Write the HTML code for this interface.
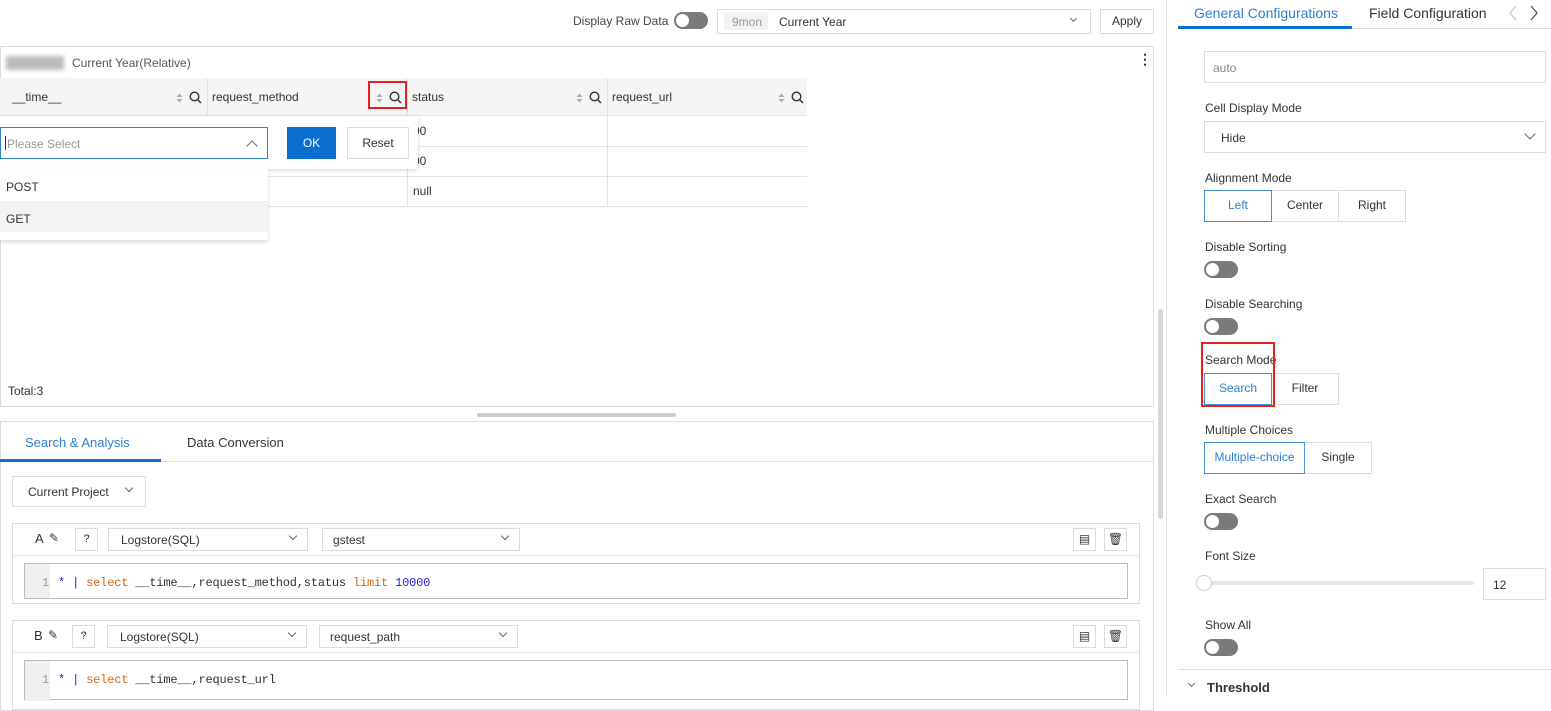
<!DOCTYPE html>
<html><head><meta charset="utf-8"><style>
*{box-sizing:border-box;margin:0;padding:0}
body{width:1551px;height:697px;overflow:hidden;background:#fff;font-family:"Liberation Sans",sans-serif;font-size:12px;color:#333;position:relative}
.a{position:absolute}
.bx{position:absolute;border:1px solid #dcdcdc;background:#fff}
.t{position:absolute;white-space:nowrap;line-height:14px}
.tog{position:absolute;width:34px;height:17px;border-radius:9px;background:#7a7a7a}
.tog:after{content:"";position:absolute;left:2px;top:2px;width:13px;height:13px;border-radius:50%;background:#fff}
.chev{position:absolute;width:8px;height:8px;border-right:1px solid #666;border-bottom:1px solid #666;transform:rotate(45deg)}
.btn{position:absolute;border:1px solid #dcdcdc;background:#fff;text-align:center;line-height:29px;font-size:12px;color:#333}
.btn.on{border-color:#4a90d9;color:#2d7fd0;z-index:2}
.mono{font-family:"Liberation Mono",monospace;font-size:12px;letter-spacing:-0.18px}
.mag{position:absolute;width:13px;height:13px}
.srt{position:absolute;width:7px;height:10px}
</style></head><body>

<div class="t" style="left:573px;top:14px;color:#444">Display Raw Data</div>
<div class="tog" style="left:674px;top:12px"></div>
<div class="bx" style="left:717px;top:9px;width:374px;height:25px"></div>
<div class="a" style="left:724px;top:13px;width:44px;height:17px;background:#f2f2f2"></div>
<div class="t" style="left:732px;top:15px;color:#999">9mon</div>
<div class="t" style="left:779px;top:15px;color:#333">Current Year</div>
<div class="chev" style="left:1071px;top:16px;width:5px;height:5px"></div>
<div class="bx" style="left:1100px;top:9px;width:54px;height:25px;text-align:center;line-height:23px;font-size:12px">Apply</div>

<div class="bx" style="left:0;top:46px;width:1154px;height:361px"></div>
<div class="a" style="left:6px;top:56px;width:58px;height:14px;background:#bbb;filter:blur(2px)"></div>
<div class="t" style="left:72px;top:56px;color:#555">Current Year(Relative)</div>
<div class="t" style="left:1138px;top:52px;font-weight:bold;font-size:14px">⋮</div>
<div class="a" style="left:0;top:78px;width:807px;height:38px;background:#f5f5f5;border-bottom:1px solid #e3e3e3"></div>
<div class="a" style="left:207px;top:78px;width:1px;height:129px;background:#e3e3e3"></div>
<div class="a" style="left:407px;top:78px;width:1px;height:129px;background:#e3e3e3"></div>
<div class="a" style="left:607px;top:78px;width:1px;height:129px;background:#e3e3e3"></div>
<div class="a" style="left:0;top:146px;width:807px;height:1px;background:#e3e3e3"></div>
<div class="a" style="left:0;top:176px;width:807px;height:1px;background:#e3e3e3"></div>
<div class="a" style="left:0;top:206px;width:807px;height:1px;background:#e3e3e3"></div>
<div class="t" style="left:12px;top:90px">__time__</div>
<div class="t" style="left:212px;top:90px">request_method</div>
<div class="t" style="left:412px;top:90px">status</div>
<div class="t" style="left:612px;top:90px">request_url</div>

<svg class="srt" style="left:176px;top:93px" viewBox="0 0 7 10"><path d="M0.5 4L3.5 0.5L6.5 4ZM0.5 6L3.5 9.5L6.5 6Z" fill="#aaa"/></svg>
<svg class="mag" style="left:189px;top:91px" viewBox="0 0 13 13"><circle cx="5.5" cy="5.5" r="4.3" fill="none" stroke="#333" stroke-width="1.4"/><path d="M8.6 8.6L12 12" stroke="#333" stroke-width="1.5"/></svg>
<svg class="srt" style="left:376px;top:93px" viewBox="0 0 7 10"><path d="M0.5 4L3.5 0.5L6.5 4ZM0.5 6L3.5 9.5L6.5 6Z" fill="#aaa"/></svg>
<svg class="mag" style="left:389px;top:91px" viewBox="0 0 13 13"><circle cx="5.5" cy="5.5" r="4.3" fill="none" stroke="#333" stroke-width="1.4"/><path d="M8.6 8.6L12 12" stroke="#333" stroke-width="1.5"/></svg>
<svg class="srt" style="left:576px;top:93px" viewBox="0 0 7 10"><path d="M0.5 4L3.5 0.5L6.5 4ZM0.5 6L3.5 9.5L6.5 6Z" fill="#aaa"/></svg>
<svg class="mag" style="left:589px;top:91px" viewBox="0 0 13 13"><circle cx="5.5" cy="5.5" r="4.3" fill="none" stroke="#333" stroke-width="1.4"/><path d="M8.6 8.6L12 12" stroke="#333" stroke-width="1.5"/></svg>
<svg class="srt" style="left:778px;top:93px" viewBox="0 0 7 10"><path d="M0.5 4L3.5 0.5L6.5 4ZM0.5 6L3.5 9.5L6.5 6Z" fill="#aaa"/></svg>
<svg class="mag" style="left:791px;top:91px" viewBox="0 0 13 13"><circle cx="5.5" cy="5.5" r="4.3" fill="none" stroke="#333" stroke-width="1.4"/><path d="M8.6 8.6L12 12" stroke="#333" stroke-width="1.5"/></svg>

<div class="a" style="left:368px;top:81px;width:39px;height:28px;border:2px solid #e82020"></div>
<div class="t" style="left:413px;top:124px">00</div>
<div class="t" style="left:413px;top:154px">00</div>
<div class="t" style="left:413px;top:184px">null</div>

<div class="a" style="left:0;top:116px;width:418px;height:53px;background:#fff;box-shadow:0 1px 4px rgba(0,0,0,.18)"></div>
<div class="a" style="left:0;top:127px;width:268px;height:32px;border:1px solid #2d7fd0;background:#fff"></div>
<div class="a" style="left:5px;top:136px;width:1px;height:14px;background:#333"></div>
<div class="t" style="left:7px;top:137px;color:#999">Please Select</div>
<div class="chev" style="left:248px;top:142px;transform:rotate(225deg)"></div>
<div class="a" style="left:287px;top:127px;width:49px;height:32px;background:#0a6fd0;color:#fff;text-align:center;line-height:32px;font-size:12px">OK</div>
<div class="bx" style="left:347px;top:127px;width:62px;height:32px;text-align:center;line-height:30px">Reset</div>
<div class="a" style="left:0;top:169px;width:268px;height:71px;background:#fff;box-shadow:0 2px 4px rgba(0,0,0,.15)"></div>
<div class="t" style="left:6px;top:180px">POST</div>
<div class="a" style="left:0;top:201px;width:268px;height:31px;background:#f3f3f3"></div>
<div class="t" style="left:6px;top:212px">GET</div>

<div class="t" style="left:8px;top:384px">Total:3</div>
<div class="a" style="left:477px;top:413px;width:199px;height:4px;background:#ccc;border-radius:2px"></div>

<div class="bx" style="left:0;top:421px;width:1154px;height:290px"></div>
<div class="a" style="left:0;top:461px;width:1154px;height:1px;background:#e3e3e3"></div>
<div class="t" style="left:25px;top:436px;color:#2d7fd0;font-size:13px">Search &amp; Analysis</div>
<div class="t" style="left:187px;top:436px;color:#333;font-size:13px">Data Conversion</div>
<div class="a" style="left:0;top:459px;width:161px;height:3px;background:#0a6fd0"></div>
<div class="bx" style="left:12px;top:476px;width:134px;height:31px"></div>
<div class="t" style="left:28px;top:485px">Current Project</div>
<div class="chev" style="left:126px;top:485px;width:6px;height:6px"></div>

<div class="bx" style="left:12px;top:523px;width:1128px;height:81px"></div>
<div class="a" style="left:12px;top:555px;width:1128px;height:1px;background:#e6e6e6"></div>
<div class="t" style="left:35px;top:532px;font-size:13px">A</div>
<div class="t" style="left:49px;top:531px;font-size:12px">✎</div>
<div class="bx" style="left:75px;top:528px;width:23px;height:23px;text-align:center;line-height:21px;font-size:11px">?</div>
<div class="bx" style="left:108px;top:528px;width:200px;height:23px"></div>
<div class="t" style="left:121px;top:533px">Logstore(SQL)</div>
<div class="chev" style="left:290px;top:533px;width:6px;height:6px"></div>
<div class="bx" style="left:322px;top:528px;width:198px;height:23px"></div>
<div class="t" style="left:333px;top:533px">gstest</div>
<div class="chev" style="left:502px;top:533px;width:6px;height:6px"></div>
<div class="bx" style="left:1073px;top:528px;width:23px;height:23px;text-align:center;line-height:21px">▤</div>
<div class="bx" style="left:1104px;top:528px;width:23px;height:23px;text-align:center;line-height:21px">🗑</div>
<div class="a" style="left:24px;top:563px;width:1104px;height:36px;border:1px solid #bbb;background:#fff"></div>
<div class="a" style="left:25px;top:564px;width:25px;height:34px;background:#f0f0f0"></div>
<div class="t mono" style="left:42px;top:576px;color:#999">1</div>
<div class="t mono" style="left:58px;top:576px"><span style="color:#22d">*</span> <span style="color:#22d">|</span> <span style="color:#d9630e">select</span> __time__,request_method,status <span style="color:#d9630e">limit</span> <span style="color:#22d">10000</span></div>

<div class="bx" style="left:12px;top:620px;width:1128px;height:90px"></div>
<div class="a" style="left:12px;top:652px;width:1128px;height:1px;background:#e6e6e6"></div>
<div class="t" style="left:34px;top:629px;font-size:13px">B</div>
<div class="t" style="left:48px;top:628px">✎</div>
<div class="bx" style="left:72px;top:625px;width:23px;height:23px;text-align:center;line-height:21px;font-size:11px">?</div>
<div class="bx" style="left:107px;top:625px;width:200px;height:23px"></div>
<div class="t" style="left:120px;top:630px">Logstore(SQL)</div>
<div class="chev" style="left:289px;top:630px;width:6px;height:6px"></div>
<div class="bx" style="left:319px;top:625px;width:199px;height:23px"></div>
<div class="t" style="left:330px;top:630px">request_path</div>
<div class="chev" style="left:500px;top:630px;width:6px;height:6px"></div>
<div class="bx" style="left:1073px;top:625px;width:23px;height:23px;text-align:center;line-height:21px">▤</div>
<div class="bx" style="left:1104px;top:625px;width:23px;height:23px;text-align:center;line-height:21px">🗑</div>
<div class="a" style="left:24px;top:660px;width:1104px;height:40px;border:1px solid #bbb;background:#fff"></div>
<div class="a" style="left:25px;top:661px;width:25px;height:40px;background:#f0f0f0"></div>
<div class="t mono" style="left:42px;top:673px;color:#999">1</div>
<div class="t mono" style="left:58px;top:673px"><span style="color:#22d">*</span> <span style="color:#22d">|</span> <span style="color:#d9630e">select</span> __time__,request_url</div>

<div class="a" style="left:1158px;top:309px;width:5px;height:210px;background:#d5d8dc;border-radius:3px"></div>
<div class="a" style="left:1166px;top:0;width:1px;height:697px;background:#e3e3e3"></div>

<div class="a" style="left:1178px;top:28px;width:373px;height:1px;background:#ddd"></div>
<div class="t" style="left:1194px;top:6px;color:#2d7fd0;font-size:14px">General Configurations</div>
<div class="a" style="left:1178px;top:26px;width:174px;height:3px;background:#0a6fd0"></div>
<div class="t" style="left:1369px;top:6px;color:#333;font-size:14px">Field Configuration</div>
<svg class="a" style="left:1508px;top:5px" width="10" height="16" viewBox="0 0 10 16"><path d="M8 1L2 8L8 15" fill="none" stroke="#ccc" stroke-width="1.3"/></svg>
<svg class="a" style="left:1529px;top:5px" width="10" height="16" viewBox="0 0 10 16"><path d="M2 1L8 8L2 15" fill="none" stroke="#555" stroke-width="1.3"/></svg>

<div class="bx" style="left:1204px;top:51px;width:342px;height:32px"></div>
<div class="t" style="left:1213px;top:61px;color:#888">auto</div>
<div class="t" style="left:1205px;top:101px">Cell Display Mode</div>
<div class="bx" style="left:1204px;top:121px;width:342px;height:32px"></div>
<div class="t" style="left:1221px;top:131px">Hide</div>
<div class="chev" style="left:1526px;top:130px"></div>
<div class="t" style="left:1205px;top:171px">Alignment Mode</div>
<div class="btn on" style="left:1204px;top:190px;width:68px;height:32px">Left</div>
<div class="btn" style="left:1271px;top:190px;width:68px;height:32px">Center</div>
<div class="btn" style="left:1338px;top:190px;width:68px;height:32px">Right</div>
<div class="t" style="left:1205px;top:240px">Disable Sorting</div>
<div class="tog" style="left:1204px;top:261px"></div>
<div class="t" style="left:1205px;top:297px">Disable Searching</div>
<div class="tog" style="left:1204px;top:318px"></div>
<div class="t" style="left:1205px;top:353px">Search Mode</div>
<div class="btn on" style="left:1204px;top:373px;width:68px;height:32px">Search</div>
<div class="btn" style="left:1271px;top:373px;width:68px;height:32px">Filter</div>
<div class="a" style="left:1201px;top:342px;width:74px;height:65px;border:2px solid #e82020;z-index:3"></div>
<div class="t" style="left:1205px;top:423px">Multiple Choices</div>
<div class="btn on" style="left:1204px;top:442px;width:101px;height:32px">Multiple-choice</div>
<div class="btn" style="left:1304px;top:442px;width:68px;height:32px">Single</div>
<div class="t" style="left:1205px;top:492px">Exact Search</div>
<div class="tog" style="left:1204px;top:513px"></div>
<div class="t" style="left:1205px;top:549px">Font Size</div>
<div class="a" style="left:1204px;top:581px;width:270px;height:4px;background:#e6e6e6;border-radius:2px"></div>
<div class="a" style="left:1196px;top:575px;width:16px;height:16px;border-radius:50%;background:#fff;border:1px solid #ccc"></div>
<div class="bx" style="left:1483px;top:568px;width:63px;height:32px"></div>
<div class="t" style="left:1493px;top:578px">12</div>
<div class="t" style="left:1205px;top:618px">Show All</div>
<div class="tog" style="left:1204px;top:639px"></div>
<div class="a" style="left:1178px;top:669px;width:373px;height:1px;background:#ddd"></div>
<div class="chev" style="left:1189px;top:681px;width:5px;height:5px"></div>
<div class="t" style="left:1207px;top:681px;font-weight:bold;font-size:13px;color:#333">Threshold</div>
</body></html>
